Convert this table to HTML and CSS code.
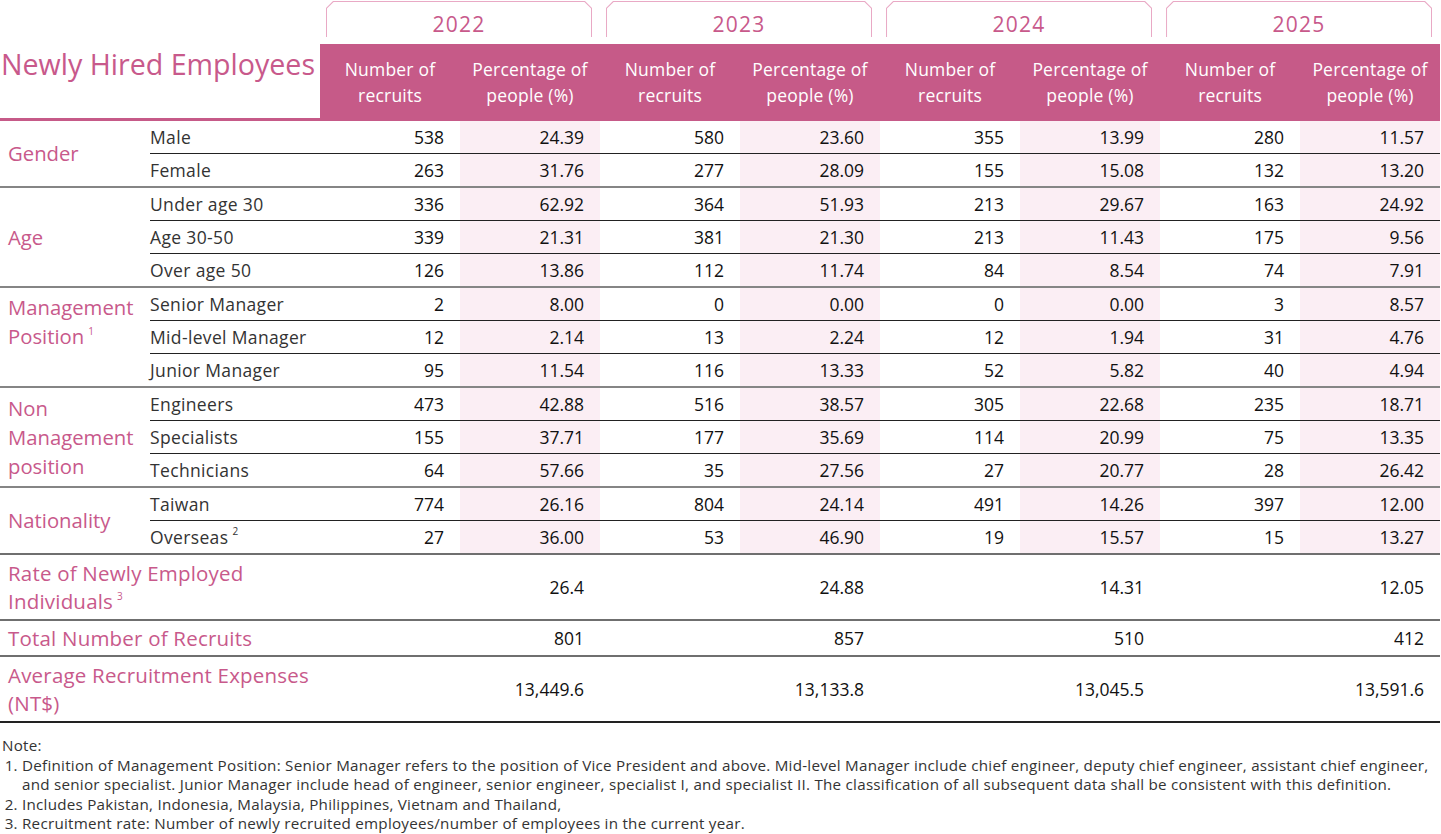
FILE: index.html
```html
<!DOCTYPE html>
<html lang="en">
<head>
<meta charset="utf-8">
<title>Newly Hired Employees</title>
<link rel="stylesheet" href="styles.css">
</head>
<body>
<table class="hire">
  <colgroup>
    <col class="c-cat"><col class="c-sub">
    <col class="c-num"><col class="c-pct">
    <col class="c-num"><col class="c-pct">
    <col class="c-num"><col class="c-pct">
    <col class="c-num"><col class="c-pct">
  </colgroup>
  <thead>
    <tr class="years">
      <td colspan="2" class="year-blank"></td>
      <td colspan="2" class="year-cell"><div class="tab"><div class="tab-in">2022</div></div></td>
      <td colspan="2" class="year-cell"><div class="tab"><div class="tab-in">2023</div></div></td>
      <td colspan="2" class="year-cell"><div class="tab"><div class="tab-in">2024</div></div></td>
      <td colspan="2" class="year-cell"><div class="tab"><div class="tab-in">2025</div></div></td>
    </tr>
    <tr class="heads">
      <th colspan="2" class="title">Newly Hired Employees</th>
      <th class="h">Number of<br>recruits</th><th class="h">Percentage of<br>people (%)</th>
      <th class="h">Number of<br>recruits</th><th class="h">Percentage of<br>people (%)</th>
      <th class="h">Number of<br>recruits</th><th class="h">Percentage of<br>people (%)</th>
      <th class="h">Number of<br>recruits</th><th class="h">Percentage of<br>people (%)</th>
    </tr>
  </thead>
  <tbody>
    <tr class="grp">
      <td rowspan="2" class="cat">Gender</td>
      <td class="sub">Male</td>
      <td class="n">538</td><td class="p">24.39</td><td class="n">580</td><td class="p">23.60</td><td class="n">355</td><td class="p">13.99</td><td class="n">280</td><td class="p">11.57</td>
    </tr>
    <tr>
      <td class="sub">Female</td>
      <td class="n">263</td><td class="p">31.76</td><td class="n">277</td><td class="p">28.09</td><td class="n">155</td><td class="p">15.08</td><td class="n">132</td><td class="p">13.20</td>
    </tr>
    <tr class="grp">
      <td rowspan="3" class="cat">Age</td>
      <td class="sub">Under age 30</td>
      <td class="n">336</td><td class="p">62.92</td><td class="n">364</td><td class="p">51.93</td><td class="n">213</td><td class="p">29.67</td><td class="n">163</td><td class="p">24.92</td>
    </tr>
    <tr>
      <td class="sub">Age 30-50</td>
      <td class="n">339</td><td class="p">21.31</td><td class="n">381</td><td class="p">21.30</td><td class="n">213</td><td class="p">11.43</td><td class="n">175</td><td class="p">9.56</td>
    </tr>
    <tr>
      <td class="sub">Over age 50</td>
      <td class="n">126</td><td class="p">13.86</td><td class="n">112</td><td class="p">11.74</td><td class="n">84</td><td class="p">8.54</td><td class="n">74</td><td class="p">7.91</td>
    </tr>
    <tr class="grp">
      <td rowspan="3" class="cat cat-top">Management Position<sup>1</sup></td>
      <td class="sub">Senior Manager</td>
      <td class="n">2</td><td class="p">8.00</td><td class="n">0</td><td class="p">0.00</td><td class="n">0</td><td class="p">0.00</td><td class="n">3</td><td class="p">8.57</td>
    </tr>
    <tr>
      <td class="sub">Mid-level Manager</td>
      <td class="n">12</td><td class="p">2.14</td><td class="n">13</td><td class="p">2.24</td><td class="n">12</td><td class="p">1.94</td><td class="n">31</td><td class="p">4.76</td>
    </tr>
    <tr>
      <td class="sub">Junior Manager</td>
      <td class="n">95</td><td class="p">11.54</td><td class="n">116</td><td class="p">13.33</td><td class="n">52</td><td class="p">5.82</td><td class="n">40</td><td class="p">4.94</td>
    </tr>
    <tr class="grp">
      <td rowspan="3" class="cat">Non Management position</td>
      <td class="sub">Engineers</td>
      <td class="n">473</td><td class="p">42.88</td><td class="n">516</td><td class="p">38.57</td><td class="n">305</td><td class="p">22.68</td><td class="n">235</td><td class="p">18.71</td>
    </tr>
    <tr>
      <td class="sub">Specialists</td>
      <td class="n">155</td><td class="p">37.71</td><td class="n">177</td><td class="p">35.69</td><td class="n">114</td><td class="p">20.99</td><td class="n">75</td><td class="p">13.35</td>
    </tr>
    <tr>
      <td class="sub">Technicians</td>
      <td class="n">64</td><td class="p">57.66</td><td class="n">35</td><td class="p">27.56</td><td class="n">27</td><td class="p">20.77</td><td class="n">28</td><td class="p">26.42</td>
    </tr>
    <tr class="grp">
      <td rowspan="2" class="cat">Nationality</td>
      <td class="sub">Taiwan</td>
      <td class="n">774</td><td class="p">26.16</td><td class="n">804</td><td class="p">24.14</td><td class="n">491</td><td class="p">14.26</td><td class="n">397</td><td class="p">12.00</td>
    </tr>
    <tr>
      <td class="sub">Overseas<sup>2</sup></td>
      <td class="n">27</td><td class="p">36.00</td><td class="n">53</td><td class="p">46.90</td><td class="n">19</td><td class="p">15.57</td><td class="n">15</td><td class="p">13.27</td>
    </tr>
    <tr class="sum tall">
      <td colspan="2" class="lbl">Rate of Newly Employed Individuals<sup>3</sup></td>
      <td></td><td class="v">26.4</td><td></td><td class="v">24.88</td><td></td><td class="v">14.31</td><td></td><td class="v">12.05</td>
    </tr>
    <tr class="sum">
      <td colspan="2" class="lbl">Total Number of Recruits</td>
      <td></td><td class="v">801</td><td></td><td class="v">857</td><td></td><td class="v">510</td><td></td><td class="v">412</td>
    </tr>
    <tr class="sum tall last">
      <td colspan="2" class="lbl">Average Recruitment Expenses (NT$)</td>
      <td></td><td class="v">13,449.6</td><td></td><td class="v">13,133.8</td><td></td><td class="v">13,045.5</td><td></td><td class="v">13,591.6</td>
    </tr>
  </tbody>
</table>

<div class="notes">
  <p class="note-title">Note:</p>
  <ol class="note-list">
    <li>Definition of Management Position: Senior Manager refers to the position of Vice President and above. Mid-level Manager include chief engineer, deputy chief engineer, assistant chief engineer, and senior specialist. Junior Manager include head of engineer, senior engineer, specialist I, and specialist II. The classification of all subsequent data shall be consistent with this definition.</li>
    <li>Includes Pakistan, Indonesia, Malaysia, Philippines, Vietnam and Thailand,</li>
    <li>Recruitment rate: Number of newly recruited employees/number of employees in the current year.</li>
  </ol>
</div>
</body>
</html>
```

FILE: styles.css
```css
body {
  margin: 0;
  background: #ffffff;
  font-family: "Open Sans", Lato, "Liberation Sans", sans-serif;
  color: #333333;
  width: 1441px;
}

.hire {
  border-collapse: collapse;
  table-layout: fixed;
  width: 1440px;
}

.c-cat { width: 150px; }
.c-sub { width: 170px; }
.c-num { width: 140px; }
.c-pct { width: 140px; }

.hire td, .hire th {
  padding: 0;
}

/* year tabs */
.years td {
  vertical-align: top;
}
.year-blank {
  height: 44px;
}
.year-cell {
  height: 36px;
  padding: 1px 8px 7px 6px !important;
}
.tab {
  background: #e9a9c5;
  padding: 1px 1px 0 1px;
  height: 36px;
  box-sizing: border-box;
  clip-path: polygon(7px 0, calc(100% - 7px) 0, 100% 7px, 100% 100%, 0 100%, 0 7px);
}
.tab-in {
  background: #ffffff;
  height: 35px;
  clip-path: polygon(6.6px 0, calc(100% - 6.6px) 0, 100% 6.6px, 100% 100%, 0 100%, 0 6.6px);
  color: #c8598b;
  font-size: 21px;
  letter-spacing: 1.3px;
  text-align: center;
  line-height: 44px;
}

/* column heads */
.heads th {
  border-bottom: 3px solid #c65a88;
  font-weight: normal;
}
.title {
  text-align: left;
  vertical-align: top;
  color: #c8598b;
  font-size: 28.6px;
  line-height: 32px;
  padding: 4px 0 0 1px !important;
  white-space: nowrap;
}
.h {
  background: #c65a88;
  color: #ffffff;
  font-size: 17.5px;
  letter-spacing: 0.2px;
  line-height: 26px;
  height: 72px;
  padding-top: 2px !important;
  vertical-align: middle;
  text-align: center;
}

/* body */
.hire tbody td {
  font-size: 17.5px;
  line-height: 32px;
  border-top: 1px solid #222222;
}
.hire tbody tr.grp td {
  border-top: 2px solid #858585;
}
.cat {
  color: #c8598b;
  font-size: 20.3px !important;
  line-height: 29px !important;
  padding-left: 8px !important;
  vertical-align: middle;
}
.cat-top {
  vertical-align: top;
  padding-top: 5px !important;
}
.sub {
  color: #333333;
  white-space: nowrap;
  letter-spacing: 0.35px;
}
.n, .p, .v {
  text-align: right;
  padding-right: 16px !important;
  color: #111111;
}
.p {
  background: #fbeef4;
}
sup {
  font-size: 10px;
  line-height: 0;
  vertical-align: 9px;
  margin-left: 4px;
}

.hire tbody tr.sum td {
  border-top: 2px solid #6f6f6f;
  height: 34px;
}
.hire tbody tr.sum.tall td {
  height: 64px;
}
.hire tbody tr.last td {
  height: 63px;
  border-bottom: 2px solid #222222;
}
.lbl {
  color: #c8598b;
  font-size: 20.5px !important;
  letter-spacing: 0.2px;
  line-height: 28px !important;
  padding-left: 8px !important;
  vertical-align: middle;
}

/* notes */
.notes {
  margin-top: 13px;
  font-size: 15.2px;
  letter-spacing: 0.25px;
  line-height: 19.5px;
  color: #333333;
}
.note-title {
  margin: 0 0 0 2px;
}
.note-list {
  margin: 0;
  padding-left: 22px;
}
```
